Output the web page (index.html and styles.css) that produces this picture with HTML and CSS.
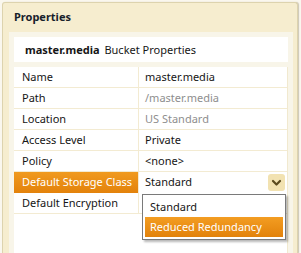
FILE: index.html
```html
<!DOCTYPE html>
<html lang="en">
<head>
  <meta charset="UTF-8">
  <title>Properties</title>
  <link rel="stylesheet" href="styles.css">
</head>
<body>
  <div class="panel">
    <div class="panel-title">Properties</div>
    <div class="panel-body">
      <div class="bucket-header"><b>master.media</b> Bucket Properties</div>
      <div class="props">
        <div class="row">
          <div class="label">Name</div>
          <div class="value">master.media</div>
        </div>
        <div class="row">
          <div class="label">Path</div>
          <div class="value muted">/master.media</div>
        </div>
        <div class="row">
          <div class="label">Location</div>
          <div class="value muted">US Standard</div>
        </div>
        <div class="row">
          <div class="label">Access Level</div>
          <div class="value">Private</div>
        </div>
        <div class="row">
          <div class="label">Policy</div>
          <div class="value">&lt;none&gt;</div>
        </div>
        <div class="row active">
          <div class="label">Default Storage Class</div>
          <div class="value select">
            <span>Standard</span>
            <span class="select-btn">
              <svg width="17" height="17" viewBox="0 0 17 17"><path d="M5 7 L8.5 10.5 L12 7" fill="none" stroke="#5b4a1e" stroke-width="2.2" stroke-linecap="round" stroke-linejoin="round"/></svg>
            </span>
            <div class="dropdown">
              <div class="option">Standard</div>
              <div class="option selected">Reduced Redundancy</div>
            </div>
          </div>
        </div>
        <div class="row">
          <div class="label">Default Encryption</div>
          <div class="value"></div>
        </div>
      </div>
    </div>
  </div>
</body>
</html>
```

FILE: styles.css
```css
body {
  margin: 0;
  background-color: #faf7ee;
  font-family: "Noto Sans", sans-serif;
  font-size: 11px;
  color: #161616;
  height: 253px;
  overflow: hidden;
}

.panel {
  margin: 2px 0 0 2px;
  width: 294px;
  height: 250px;
  background-color: #f6edcf;
  border: 1px solid #ddd3ae;
  border-bottom: none;
  border-radius: 3px 3px 0 0;
  box-shadow: 1px 0 1px rgba(120, 110, 80, 0.35);
}

.panel-title {
  height: 29px;
  line-height: 27px;
  padding-left: 11px;
  font-weight: bold;
  color: #17212b;
}

.panel-body {
  margin: 0 4px 0 6px;
  padding: 5px 5px 0 5px;
  height: 216px;
  background-color: #f8f5e9;
}

.bucket-header {
  height: 25px;
  line-height: 25px;
  padding-left: 11px;
  background-color: #fff;
  margin-bottom: 5px;
}

.bucket-header b {
  margin-right: 2px;
}

.props {
  background-color: #fff;
  border-right: 1px solid #f1e9cf;
  height: 186px;
}

.row {
  display: grid;
  grid-template-columns: 125px 1fr;
  height: 20px;
  line-height: 20px;
  border-bottom: 1px solid #f3ebd2;
}

.label {
  padding-left: 8px;
  border-right: 1px solid #f3ebd2;
}

.value {
  padding-left: 6px;
  position: relative;
}

.muted {
  color: #8e8e8e;
}

.row.active {
  border-bottom-color: #fff;
}

.row.active .label {
  background: linear-gradient(#f09a1f, #e3820b);
  color: #fff;
  margin-bottom: -1px;
  border-right-color: #f3ebd2;
}

.select {
  display: flex;
  align-items: center;
  justify-content: space-between;
  padding-right: 2px;
}

.select-btn {
  width: 17px;
  height: 17px;
  border-radius: 3px;
  background-color: #f2e2b1;
  display: flex;
}

.dropdown {
  position: absolute;
  top: 22px;
  left: 3px;
  width: 138px;
  padding: 2px;
  background-color: #fff;
  border: 1px solid #7a7a7a;
  box-shadow: 2px 2px 2px rgba(0, 0, 0, 0.28);
  z-index: 2;
}

.option {
  height: 20px;
  line-height: 20px;
  padding-left: 5px;
}

.option.selected {
  background: linear-gradient(#f39d22, #e2820b);
  color: #fff;
}
```
